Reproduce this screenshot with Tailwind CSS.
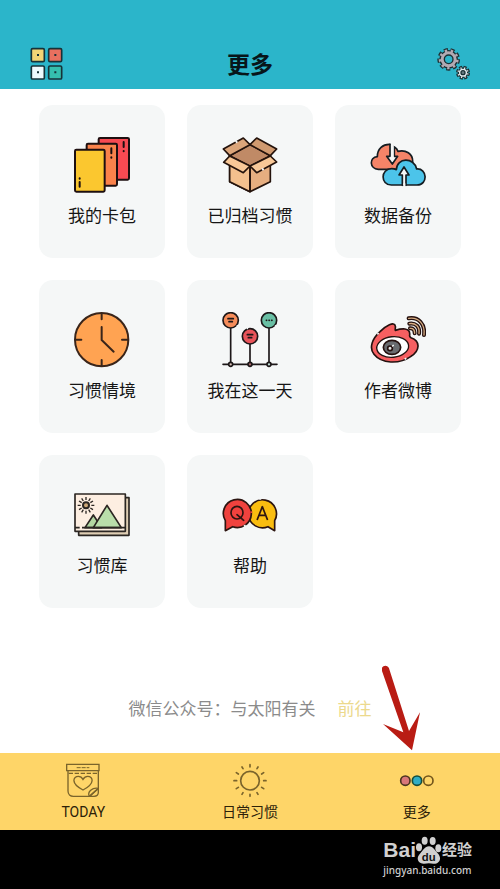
<!DOCTYPE html>
<html lang="zh-CN">
<head>
    <meta charset="UTF-8">
    <meta name="viewport" content="width=device-width, initial-scale=1.0">
    <title>更多</title>
    <script src="https://cdn.jsdelivr.net/npm/@tailwindcss/browser@4"></script>
</head>

<body class="flex flex-col min-h-screen bg-white text-[#151515] font-[Roboto,'Noto_Sans_CJK_SC',sans-serif]">
    <header class="flex items-end justify-between h-[89px] px-[29px] pb-2 bg-[#2bb5ca]">
        <button type="button" aria-label="分类">
            <svg class="w-[35px] h-[34px]" viewBox="87 51 105 102" stroke="#173238" stroke-width="5">
                <rect x="94" y="56" width="39" height="39" rx="4" fill="#f3d575"/>
                <rect x="146" y="56" width="39" height="39" rx="4" fill="#e8705f"/>
                <rect x="94" y="108" width="39" height="39" rx="4" fill="#eefafd"/>
                <rect x="146" y="108" width="39" height="39" rx="4" fill="#35bfae"/>
                <path d="M111 75h6M163 75h6M111 127h6M163 127h6" stroke-width="6"/>
            </svg>
        </button>
        <h1 class="text-[23px] leading-[30px] font-bold text-[#07161a]">更多</h1>
        <button type="button" aria-label="设置">
            <svg class="w-[35px] h-[34px]" viewBox="1308 51 105 102" fill="none" stroke="#1c3034">
                <circle cx="1346" cy="88" r="29" stroke-width="10" pathLength="90" stroke-dasharray="6 4"/>
                <circle cx="1346" cy="88" r="26" stroke-width="4" fill="#b3aab2"/>
                <circle cx="1346" cy="88" r="26" stroke="#b3aab2" stroke-width="8" pathLength="90" stroke-dasharray="4 6" stroke-dashoffset="-1"/>
                <circle cx="1346" cy="88" r="13" stroke-width="4" fill="#2bb5ca"/>
                <circle cx="1389" cy="128" r="17" stroke-width="8" pathLength="80" stroke-dasharray="7 3"/>
                <circle cx="1389" cy="128" r="14" stroke-width="4" fill="#e6eef1"/>
                <circle cx="1389" cy="128" r="14" stroke="#e6eef1" stroke-width="6" pathLength="80" stroke-dasharray="3 7" stroke-dashoffset="-2"/>
                <circle cx="1389" cy="128" r="6" stroke-width="4" fill="#687980"/>
            </svg>
        </button>
    </header>

    <main class="flex flex-col flex-1">
        <nav class="grid grid-cols-3 gap-[22px] px-[39px] pt-4 text-[17px] leading-6">
            <a href="#" class="flex flex-col items-center gap-[11px] pt-8 pb-[30px] rounded-[14px] bg-[#f5f7f7]">
                <svg class="w-[56px] h-[56px]" viewBox="132 111 168 168" stroke="#1d0f10" stroke-width="6" stroke-linecap="round">
                    <rect x="206" y="114" width="91" height="125" rx="4" fill="#f84a52"/>
                    <path d="M281 126v15M281 153v1"/>
                    <rect x="170" y="131" width="91" height="126" rx="4" fill="#fa824b"/>
                    <path d="M244 145v15M244 172v1"/>
                    <rect x="135" y="149" width="89" height="126" rx="4" fill="#fbc72f"/>
                    <path d="M149 235v1M149 246v14"/>
                </svg>
                <span>我的卡包</span>
            </a>
            <a href="#" class="flex flex-col items-center gap-[11px] pt-8 pb-[30px] rounded-[14px] bg-[#f5f7f7]">
                <svg class="w-[56px] h-[56px]" viewBox="126 111 168 168" stroke="#24130c" stroke-width="5" stroke-linejoin="round" stroke-linecap="round">
                    <path d="M149 165v80l61 30 61-30v-80l-61 32z" fill="#e6ae80"/>
                    <path d="M149 165v80l61 30v-78z" fill="#f3c08e"/>
                    <path d="M149 167l61-34 61 34-61 32z" fill="#c08a66"/>
                    <path d="M130 147l60-33 20 20-61 33z" fill="#dba57a"/>
                    <path d="M290 147l-60-33-20 20 61 33z" fill="#d09a70"/>
                    <path d="M149 168l-18 19 59 31 20-20z" fill="#f8c898"/>
                    <path d="M271 168l19 18-60 32-20-20z" fill="#f8c898"/>
                    <path d="M210 199v75" fill="none"/>
                    <path d="M167 127l5-3" stroke="#f5f7f7" stroke-linecap="butt" stroke-width="7"/>
                    <path d="M246 209l5-3" stroke="#f5f7f7" stroke-linecap="butt" stroke-width="7"/>
                </svg>
                <span>已归档习惯</span>
            </a>
            <a href="#" class="flex flex-col items-center gap-[11px] pt-8 pb-[30px] rounded-[14px] bg-[#f5f7f7]">
                <svg class="w-[56px] h-[56px]" viewBox="120 111 168 168" stroke="#151d22" stroke-width="5" stroke-linejoin="round" stroke-linecap="round">
                    <path d="M145 208c-27-1-28-37-3-38 0-24 17-38 38-37l14 9c5 3 8 7 10 12 24-6 44 8 44 29 0 17-12 25-25 25z" fill="#f58468"/>
                    <path d="M180 133v36h-10l17 23 16-23h-10v-28" fill="#f5f7f7"/>
                    <path d="M183 128h8v44h-8z" fill="#f5f7f7" stroke="none"/>
                    <path d="M184 255c-33 0-33-49 1-49 6 0 10 1 14 3 2-38 53-38 61-2 32-3 35 48 1 48z" fill="#4cc4ea"/>
                    <path d="M217 256v-31h-10l15-24 15 24h-9v31" fill="#f5f7f7"/>
                    <path d="M220 250h6v10h-6z" fill="#f5f7f7" stroke="none"/>
                </svg>
                <span>数据备份</span>
            </a>
            <a href="#" class="flex flex-col items-center gap-[11px] pt-8 pb-[30px] rounded-[14px] bg-[#f5f7f7]">
                <svg class="w-[56px] h-[56px]" viewBox="132 111 168 168" stroke="#3a251a" stroke-width="6" stroke-linecap="round" stroke-linejoin="round">
                    <circle cx="215" cy="194" r="80" fill="#ffa352"/>
                    <path d="M215 116v17M215 255v17M137 194h17M276 194h17M215 156v39l36 35" fill="none"/>
                </svg>
                <span>习惯情境</span>
            </a>
            <a href="#" class="flex flex-col items-center gap-[11px] pt-8 pb-[30px] rounded-[14px] bg-[#f5f7f7]">
                <svg class="w-[56px] h-[56px]" viewBox="126 111 168 168" stroke="#1c1718" stroke-width="5" stroke-linecap="round">
                    <path d="M129 268h162M152 160v102M210 208v54M267 160v102"/>
                    <circle cx="152" cy="136" r="23" fill="#f58c5a"/>
                    <circle cx="210" cy="184" r="23" fill="#e8545a"/>
                    <circle cx="267" cy="136" r="23" fill="#69bfa4"/>
                    <path d="M144 131h16M147 140h10M202 179h16M205 188h10"/>
                    <path d="M259 136h1M267 136h1M275 136h1"/>
                    <circle cx="152" cy="268" r="6" fill="#d7c0b6"/>
                    <circle cx="210" cy="268" r="6" fill="#a9686b"/>
                    <circle cx="267" cy="268" r="6" fill="#c4e0d8"/>
                    <path d="M170 155l4-4M200 161l4-2M285 155l4-4" stroke="#f5f7f7" stroke-linecap="butt"/>
                </svg>
                <span>我在这一天</span>
            </a>
            <a href="#" class="flex flex-col items-center gap-[11px] pt-8 pb-[30px] rounded-[14px] bg-[#f5f7f7]">
                <svg class="w-[56px] h-[56px]" viewBox="120 111 168 168" stroke="#25110f" stroke-width="5" stroke-linecap="round" stroke-linejoin="round">
                    <path d="M150 170c17-17 43-32 46-17 1 4-1 9 0 13 17-5 46-10 43 14-1 4 0 6 4 8 30 10 26 40 0 56-36 25-89 22-111-6-16-20-5-47 18-68z" fill="#f65f61"/>
                    <ellipse cx="188" cy="216" rx="48" ry="31" transform="rotate(-6 188 216)" fill="#fff" stroke-width="4"/>
                    <ellipse cx="186" cy="217" rx="26" ry="21" fill="#696c70"/>
                    <circle cx="180" cy="220" r="7" fill="#e7e8e8"/>
                    <path d="M188 213l2-2" stroke="#fff" stroke-width="4"/>
                    <g fill="none">
                        <path d="M236 130c29-5 50 17 46 50M238 146c18-3 32 8 29 30M240 160c10-1 14 5 14 15" stroke-width="12"/>
                        <path d="M236 130c29-5 50 17 46 50M238 146c18-3 32 8 29 30M240 160c10-1 14 5 14 15" stroke="#d8ae83" stroke-width="4"/>
                    </g>
                    <path d="M142 178l4-4M224 253l5-3" stroke="#f5f7f7" stroke-linecap="butt"/>
                </svg>
                <span>作者微博</span>
            </a>
            <a href="#" class="flex flex-col items-center gap-[11px] pt-8 pb-[30px] rounded-[14px] bg-[#f5f7f7]">
                <svg class="w-[56px] h-[56px]" viewBox="132 111 168 168" stroke="#2b2622" stroke-width="5" stroke-linejoin="round">
                    <path d="M146 143h151v113H146z" fill="#dfceb4"/>
                    <path d="M135 132h151v112H135z" fill="#fdeee1"/>
                    <path d="M165 233l25-38 25 38z" fill="#b3d7a2"/>
                    <path d="M190 233l41-67 43 67z" fill="#b9deaa"/>
                    <path d="M135 233h14M156 233h130"/>
                    <circle cx="168" cy="166" r="9" fill="#cda878" stroke-width="6"/>
                    <path d="M168 141v9M168 182v9M143 166h9M184 166h9M155 145l5 8M176 179l5 8M147 153l8 5M181 174l8 5M147 179l8-5M181 158l8-5M155 187l5-8M176 153l5-8" stroke-width="4"/>
                </svg>
                <span>习惯库</span>
            </a>
            <a href="#" class="flex flex-col items-center gap-[11px] pt-8 pb-[30px] rounded-[14px] bg-[#f5f7f7]">
                <svg class="w-[56px] h-[56px]" viewBox="126 111 168 168" stroke="#2c1511" stroke-width="5" stroke-linecap="round" stroke-linejoin="round">
                    <path d="M284 242v-30a42 42 0 1 0-20 18z" fill="#fabd10"/>
                    <path d="M136 242v-30a42 42 0 1 1 22 18z" fill="#f0423e"/>
                    <g fill="none">
                        <ellipse cx="171" cy="188" rx="18" ry="19"/>
                        <path d="M171 194l20 17M232 208l15-38 15 38M237 196h20"/>
                    </g>
                    <path d="M192 229l5-3M238 147l5-2" stroke="#f5f7f7" stroke-linecap="butt" stroke-width="6"/>
                    <path d="M214 184v5" stroke="#f0423e" stroke-linecap="butt"/>
                </svg>
                <span>帮助</span>
            </a>
        </nav>

        <p class="flex justify-center gap-[22px] mt-auto pt-8 pb-8 text-[17px] leading-6 text-[#8b8b8b]">
            <span>微信公众号：与太阳有关</span>
            <a href="#" class="text-[#ecd98c]">前往</a>
        </p>
    </main>

    <nav class="grid grid-cols-3 h-[77px] pt-[10px] bg-[#fed568] text-sm leading-5 text-[#2c2108]">
        <a href="#" class="flex flex-col items-center gap-[3px]">
            <svg class="w-[36px] h-[36px]" viewBox="196 69 108 108" fill="none" stroke="#7a642b" stroke-width="4">
                <path d="M201 73h97v19h-97zM205 92v61c0 10 7 16 16 16h48l27-24V92"/>
                <path d="M207 100h88" stroke-dasharray="13 5"/>
                <path d="M231 83h38" stroke-dasharray="12 3" stroke-width="3"/>
                <path d="M250 150c-39-20-29-41-14-41 8 0 12 5 14 9 3-5 7-9 14-9 16 0 24 22-14 41z"/>
                <path d="M269 169c-7-14 9-27 27-24v12c0 8-5 12-13 12zM272 167l22-20"/>
            </svg>
            <span>TODAY</span>
        </a>
        <a href="#" class="flex flex-col items-center gap-[3px]">
            <svg class="w-[36px] h-[36px]" viewBox="696 69 108 108" fill="none" stroke="#7a642b" stroke-width="5" stroke-linecap="round">
                <circle cx="750" cy="122" r="28"/>
                <path d="M750 74v7M750 163v6M702 122h8M791 122h7M726 81l3 5M771 158l3 5M709 98l6 4M785 142l6 4M709 146l6-4M785 102l6-4M726 163l3-5M771 86l3-5"/>
            </svg>
            <span>日常习惯</span>
        </a>
        <a href="#" class="relative flex flex-col items-center gap-[3px]">
            <svg class="w-[36px] h-[36px]" viewBox="176 339 108 108" stroke="#4c3520" stroke-width="5">
                <circle cx="195" cy="392" r="14" fill="#d9777a"/>
                <circle cx="230" cy="392" r="14" fill="#31adc4" stroke="#164d3c"/>
                <circle cx="264" cy="392" r="14" fill="#fed568" stroke="#72551b"/>
            </svg>
            <span>更多</span>
            <svg class="absolute bottom-full left-1/2 w-[39px] h-[86px] -ml-[35px] mb-3" viewBox="126 45 117 258" aria-hidden="true">
                <path d="M125 60c-2-14 18-18 22-5L207 243L240 187L216 301L129 222L190 247z" fill="#b91c14"/>
            </svg>
        </a>
    </nav>

    <footer class="flex justify-end h-[59px] pt-[6px] pr-[28px] bg-black text-[#d0d0d0]">
        <div>
            <div class="flex items-center h-[28px]">
                <span class="text-[21px] leading-7 font-bold font-['Liberation_Sans',sans-serif]">Bai</span>
                <svg class="w-[26px] h-[28px]" viewBox="221 556 78 84" fill="#d0d0d0">
                    <ellipse cx="230" cy="590" rx="9" ry="12"/>
                    <ellipse cx="247" cy="570" rx="9" ry="12"/>
                    <ellipse cx="271" cy="571" rx="9" ry="12"/>
                    <ellipse cx="288" cy="593" rx="9" ry="12"/>
                    <path d="M260 587c13 0 17 12 26 21 16 17 2 33-13 31-9-2-18-2-27 0-16 2-28-14-13-30 10-10 14-22 27-22z"/>
                    <text x="259" y="631" text-anchor="middle" fill="#111" font-size="34" font-weight="700" font-family="Liberation Sans, sans-serif">du</text>
                </svg>
                <span class="text-[15px] leading-7 font-bold">经验</span>
            </div>
            <div class="text-[10px] leading-3 font-medium font-['Noto_Sans',sans-serif]">jingyan.baidu.com</div>
        </div>
    </footer>
</body>
</html>
